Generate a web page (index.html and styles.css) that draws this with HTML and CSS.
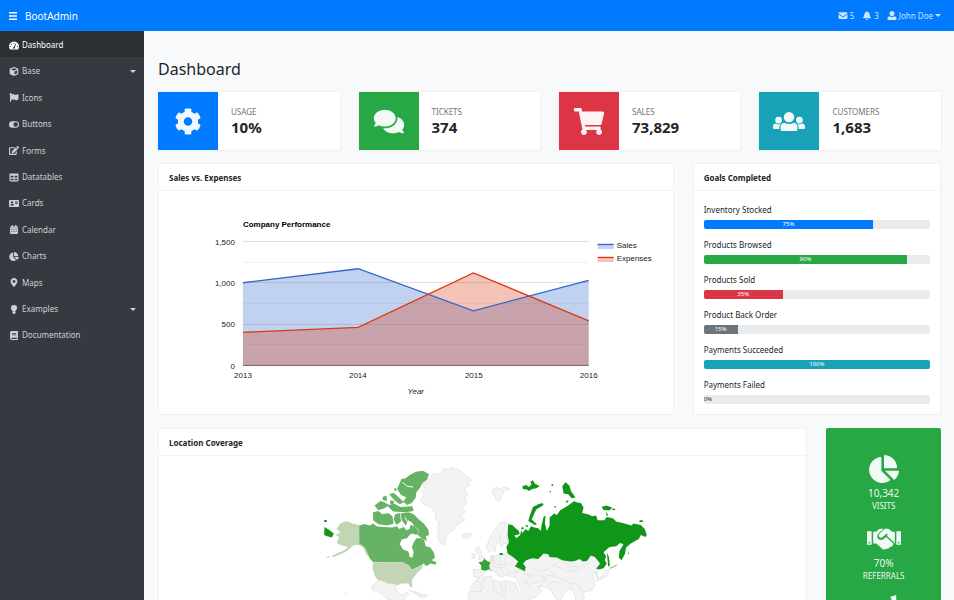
FILE: index.html
```html
<!DOCTYPE html>
<html lang="en">
<head>
<meta charset="utf-8">
<title>BootAdmin</title>
<link rel="stylesheet" href="styles.css">
</head>
<body>
<svg class="sprite" aria-hidden="true">
  <symbol id="cog" viewBox="0 0 512 512"><path d="M444.788 291.1l42.616 24.599c4.867 2.809 7.126 8.618 5.459 13.985-11.07 35.642-29.97 67.842-54.689 94.586a12.016 12.016 0 0 1-14.832 2.254l-42.584-24.595a191.577 191.577 0 0 1-60.759 35.13v49.182a12.01 12.01 0 0 1-9.377 11.718c-34.956 7.85-72.499 8.256-109.219.007-5.49-1.233-9.403-6.096-9.403-11.723v-49.184a191.555 191.555 0 0 1-60.759-35.13l-42.584 24.595a12.016 12.016 0 0 1-14.832-2.254c-24.718-26.744-43.619-58.944-54.689-94.586-1.667-5.366.592-11.175 5.459-13.985L67.212 291.1a193.48 193.48 0 0 1 0-70.199l-42.616-24.599c-4.867-2.809-7.126-8.618-5.459-13.985 11.07-35.642 29.97-67.842 54.689-94.586a12.016 12.016 0 0 1 14.832-2.254l42.584 24.595a191.577 191.577 0 0 1 60.759-35.13V25.759a12.01 12.01 0 0 1 9.377-11.718c34.956-7.85 72.499-8.256 109.219-.007 5.49 1.233 9.403 6.096 9.403 11.723v49.184a191.555 191.555 0 0 1 60.759 35.13l42.584-24.595a12.016 12.016 0 0 1 14.832 2.254c24.718 26.744 43.619 58.944 54.689 94.586 1.667 5.366-.592 11.175-5.459 13.985L444.788 220.9a193.485 193.485 0 0 1 0 70.2zM336 256c0-44.112-35.888-80-80-80s-80 35.888-80 80 35.888 80 80 80 80-35.888 80-80z"/></symbol>
  <symbol id="comments" viewBox="0 0 576 512"><path d="M416 192c0-88.4-93.1-160-208-160S0 103.6 0 192c0 34.3 14.1 65.9 38 92-13.4 30.2-35.5 54.2-35.8 54.5-2.2 2.3-2.8 5.7-1.5 8.7S4.8 352 8 352c36.6 0 66.9-12.3 88.7-25 32.2 15.7 70.3 25 111.3 25 114.9 0 208-71.6 208-160zm122 220c23.9-26 38-57.7 38-92 0-66.9-53.5-124.2-129.3-148.1.9 6.6 1.3 13.3 1.3 20.1 0 105.9-107.7 192-240 192-10.8 0-21.3-.8-31.7-1.9C207.8 439.6 281.8 480 368 480c41 0 79.1-9.2 111.3-25 21.8 12.7 52.1 25 88.7 25 3.2 0 6.1-1.9 7.3-4.8 1.3-2.9.7-6.3-1.5-8.7-.3-.3-22.4-24.2-35.8-54.5z"/></symbol>
  <symbol id="cart" viewBox="0 0 576 512"><path d="M528.12 301.319l47.273-208C578.806 78.301 567.391 64 551.99 64H159.208l-9.166-44.81C147.758 8.021 137.93 0 126.529 0H24C10.745 0 0 10.745 0 24v16c0 13.255 10.745 24 24 24h69.883l70.248 343.435C147.325 417.1 136 435.222 136 456c0 30.928 25.072 56 56 56s56-25.072 56-56c0-15.674-6.447-29.835-16.824-40h209.647C430.447 426.165 424 440.326 424 456c0 30.928 25.072 56 56 56s56-25.072 56-56c0-22.172-12.888-41.332-31.579-50.405l5.517-24.276c3.413-15.018-8.002-29.319-23.403-29.319H218.117l-6.545-32h293.145c11.206 0 20.92-7.754 23.403-18.681z"/></symbol>
  <symbol id="users" viewBox="0 0 640 512"><path d="M320 64a104 104 0 1 1 0 208 104 104 0 0 1 0-208zM112 160a68 68 0 1 1 0 136 68 68 0 0 1 0-136zm416 0a68 68 0 1 1 0 136 68 68 0 0 1 0-136zM226 280c60 32 128 32 188 0 44 4 74 36 74 80v56c0 20-14 32-32 32H184c-18 0-32-12-32-32v-56c0-44 30-76 74-80zM58 298c34 22 74 22 108 0-26 20-38 46-38 78v32H24c-14 0-24-10-24-24v-28c0-34 26-56 58-58zm524 0c-34 22-74 22-108 0 26 20 38 46 38 78v32h104c14 0 24-10 24-24v-28c0-34-26-56-58-58z"/></symbol>
  <symbol id="pie" viewBox="0 0 544 512"><path d="M527.79 288H290.5l158.03 158.03c6.04 6.04 15.98 6.53 22.19.68 38.7-36.46 65.32-85.61 73.13-140.86 1.34-9.46-6.51-17.85-16.06-17.85zm-15.83-64.8C503.72 103.74 408.26 8.28 288.8.04 279.68-.59 272 7.1 272 16.24V240h223.77c9.14 0 16.82-7.68 16.19-16.8zM224 288V50.71c0-9.55-8.39-17.4-17.84-16.06C86.99 51.49-4.1 155.6.14 280.37 4.5 408.51 114.83 513.59 243.03 511.98c50.4-.63 96.97-16.87 135.26-44.03 7.9-5.6 8.42-17.23 1.57-24.08L224 288z"/></symbol>
  <symbol id="handshake" viewBox="0 0 640 512"><path fill-rule="evenodd" d="M0 110h88v256H0zM28 326a16 16 0 1 0 32 0 16 16 0 0 0-32 0zM552 110h88v256h-88zm28 216a16 16 0 1 0 32 0 16 16 0 0 0-32 0z"/><path d="M116 120h56l50-46c10-8 20-12 32-12h56l-92 86c-34 32-32 78-4 106 28 28 70 28 102 2l44-40 122 110c14 14 16 34 4 48l-18 22c-10 12-30 14-42 4-6 34-34 48-58 36-20 20-54 28-82 2L176 340h-60zM524 120h-54l-50-46c-10-8-20-12-32-12h-38c-10 0-20 4-28 12l-88 84c-18 18-18 44-2 62 14 16 40 18 58 4l70-64c8-6 18-6 24 2 6 6 6 18-2 24l-10 10 126 112c6 6 10 14 14 32h12z"/></symbol>
  <symbol id="line" viewBox="0 0 512 512"><path d="M480 0v150L436 106 330 220 230 170 96 310l-44-44 170-170 100 60 78-84-36-36z"/></symbol>
  <symbol id="gauge" viewBox="0 0 576 512"><path fill-rule="evenodd" d="M288 32a288 288 0 0 1 249 432c-6 10-12 16-24 16H63c-12 0-18-6-24-16A288 288 0 0 1 288 32zm0 60a34 34 0 1 0 0 68 34 34 0 0 0 0-68zM144 150a34 34 0 1 0 0 68 34 34 0 0 0 0-68zM90 280a34 34 0 1 0 0 68 34 34 0 0 0 0-68zm396 0a34 34 0 1 0 0 68 34 34 0 0 0 0-68zM370 150l-78 180a56 56 0 1 0 44 20l72-184z"/></symbol>
  <symbol id="cube" viewBox="0 0 512 512"><path fill-rule="evenodd" d="M256 4l224 84c12 5 20 15 20 28v262c0 12-6 22-18 28L256 510 30 406c-12-6-18-16-18-28V116c0-13 8-23 20-28zm0 66L80 134l176 72 176-72zm30 360l154-76V196l-154 64z"/></symbol>
  <symbol id="flag" viewBox="0 0 512 512"><path d="M349.565 98.783C295.978 98.783 251.721 64 184.348 64c-24.955 0-47.309 4.384-68.045 12.013a55.947 55.947 0 0 0 3.586-23.562C118.117 24.015 94.806 1.206 66.338.048 34.345-1.254 8 24.296 8 56c0 19.026 9.497 35.825 24 45.945V488c0 13.255 10.745 24 24 24h16c13.255 0 24-10.745 24-24v-94.4c28.311-12.064 63.582-22.122 114.435-22.122 53.588 0 97.844 34.783 165.217 34.783 48.169 0 86.667-16.294 122.505-40.858C506.84 359.452 512 349.571 512 339.045v-243.1c0-23.393-24.269-38.87-45.485-29.016-34.338 15.948-76.454 31.854-116.95 31.854z"/></symbol>
  <symbol id="toggle" viewBox="0 0 576 512"><path fill-rule="evenodd" d="M192 64h192a192 192 0 0 1 0 384H192a192 192 0 0 1 0-384zm192 64a128 128 0 1 0 0 256 128 128 0 0 0 0-256z"/></symbol>
  <symbol id="edit" viewBox="0 0 576 512"><path d="M402.6 83.2l90.2 90.2c3.8 3.8 3.8 10 0 13.8L274.4 405.6l-92.8 10.3c-12.4 1.4-22.9-9.1-21.5-21.5l10.3-92.8L388.8 83.2c3.8-3.8 10-3.8 13.8 0zm162-22.9l-48.8-48.8c-15.2-15.2-39.9-15.2-55.2 0l-35.4 35.4c-3.8 3.8-3.8 10 0 13.8l90.2 90.2c3.8 3.8 10 3.8 13.8 0l35.4-35.4c15.2-15.3 15.2-40 0-55.2zM384 346.2V448H64V128h229.8c3.2 0 6.2-1.3 8.5-3.5l40-40c7.6-7.6 2.2-20.5-8.5-20.5H48C21.5 64 0 85.5 0 112v352c0 26.5 21.5 48 48 48h352c26.5 0 48-21.5 48-48V306.2c0-10.7-12.9-16-20.5-8.5l-40 40c-2.2 2.3-3.5 5.3-3.5 8.5z"/></symbol>
  <symbol id="table" viewBox="0 0 512 512"><path fill-rule="evenodd" d="M48 32h416c26 0 48 22 48 48v352c0 26-22 48-48 48H48c-26 0-48-22-48-48V80c0-26 22-48 48-48zm16 128v96h160v-96zm224 0v96h160v-96zM64 320v96h160v-96zm224 0v96h160v-96z"/></symbol>
  <symbol id="idcard" viewBox="0 0 576 512"><path fill-rule="evenodd" d="M48 48h480c26 0 48 22 48 48v320c0 26-22 48-48 48H48c-26 0-48-22-48-48V96c0-26 22-48 48-48zm128 80a64 64 0 1 0 0 128 64 64 0 0 0 0-128zM72 368h208c0-56-30-88-60-88h-88c-30 0-60 32-60 88zm280-224v48h160v-48zm0 96v48h160v-48z"/></symbol>
  <symbol id="calendar" viewBox="0 0 448 512"><path fill-rule="evenodd" d="M96 0h64v64h128V0h64v64h48c26 0 48 22 48 48v352c0 26-22 48-48 48H48c-26 0-48-22-48-48V112c0-26 22-48 48-48h48zM0 150v24h448v-24zM70 226v50h60v-50zm124 0v50h60v-50zm124 0v50h60v-50zM70 350v50h60v-50zm124 0v50h60v-50zm124 0v50h60v-50z"/></symbol>
  <symbol id="marker" viewBox="0 0 384 512"><path d="M172.268 501.67C26.97 291.031 0 269.413 0 192 0 85.961 85.961 0 192 0s192 85.961 192 192c0 77.413-26.97 99.031-172.268 309.67-9.535 13.774-29.93 13.773-39.464 0zM192 272c44.183 0 80-35.817 80-80s-35.817-80-80-80-80 35.817-80 80 35.817 80 80 80z"/></symbol>
  <symbol id="bulb" viewBox="0 0 384 512"><path d="M192 0a176 176 0 0 1 176 176c0 90-70 110-84 176H100c-14-66-84-86-84-176A176 176 0 0 1 192 0zM104 376h176v60l-40 76h-96l-40-76z"/></symbol>
  <symbol id="book" viewBox="0 0 448 512"><path fill-rule="evenodd" d="M96 0h328c14 0 24 10 24 24v336c0 10-5 16-10 20-4 18-4 50 0 66 6 4 10 10 10 18v24c0 14-10 24-24 24H96c-54 0-96-42-96-96V96C0 42 42 0 96 0zm16 128v36h232v-36zm0 72v36h232v-36zM96 384c-42 0-42 64 0 64h286c-4-20-4-44 0-64z"/></symbol>
  <symbol id="envelope" viewBox="0 0 512 512"><path d="M48 64h416c26 0 48 22 48 48v20L276 300c-12 9-28 9-40 0L0 132v-20c0-26 22-48 48-48zM0 180l220 158c20 14 52 14 72 0l220-158v220c0 26-22 48-48 48H48c-26 0-48-22-48-48z"/></symbol>
  <symbol id="bell" viewBox="0 0 448 512"><path d="M224 0c18 0 32 14 32 32v20c74 14 126 76 126 156 0 98 34 114 58 146 20 28 4 62-32 62H40c-36 0-52-34-32-62 24-32 58-48 58-146 0-80 52-142 126-156V32c0-18 14-32 32-32zM160 448h128a64 64 0 0 1-128 0z"/></symbol>
  <symbol id="user" viewBox="0 0 512 512"><path d="M256 0a144 144 0 0 1 144 144c0 90-64 160-144 160s-144-70-144-160A144 144 0 0 1 256 0zM130 296c70 64 182 64 252 0l52 14c46 12 78 50 78 96v58c0 28-20 48-48 48H48c-28 0-48-20-48-48v-58c0-46 32-84 78-96z"/></symbol>
</svg>

<div class="app">
  <header class="navbar">
    <button class="menu-toggle" type="button" aria-label="Toggle sidebar"><svg viewBox="0 0 8 8"><path d="M0 0h8v1.5H0zM0 3.2h8v1.5H0zM0 6.4h8V8H0z"/></svg></button>
    <a class="brand" href="#">BootAdmin</a>
    <nav class="account">
      <a href="#"><svg class="icon"><use href="#envelope"/></svg>5</a>
      <a href="#"><svg class="icon"><use href="#bell"/></svg>3</a>
      <a href="#"><svg class="icon"><use href="#user"/></svg>John Doe<span class="caret"></span></a>
    </nav>
  </header>

  <aside class="sidebar">
    <nav>
      <a class="active" href="#"><svg class="icon"><use href="#gauge"/></svg>Dashboard</a>
      <a href="#"><svg class="icon"><use href="#cube"/></svg>Base<span class="caret"></span></a>
      <a href="#"><svg class="icon"><use href="#flag"/></svg>Icons</a>
      <a href="#"><svg class="icon"><use href="#toggle"/></svg>Buttons</a>
      <a href="#"><svg class="icon"><use href="#edit"/></svg>Forms</a>
      <a href="#"><svg class="icon"><use href="#table"/></svg>Datatables</a>
      <a href="#"><svg class="icon"><use href="#idcard"/></svg>Cards</a>
      <a href="#"><svg class="icon"><use href="#calendar"/></svg>Calendar</a>
      <a href="#"><svg class="icon"><use href="#pie"/></svg>Charts</a>
      <a href="#"><svg class="icon"><use href="#marker"/></svg>Maps</a>
      <a href="#"><svg class="icon"><use href="#bulb"/></svg>Examples<span class="caret"></span></a>
      <a href="#"><svg class="icon"><use href="#book"/></svg>Documentation</a>
    </nav>
  </aside>

  <main class="content">
    <h1>Dashboard</h1>
    <div class="grid">
      <section class="stat"><div class="stat-icon blue"><svg><use href="#cog"/></svg></div><div class="stat-text"><span>USAGE</span><strong>10%</strong></div></section>
      <section class="stat"><div class="stat-icon green"><svg><use href="#comments"/></svg></div><div class="stat-text"><span>TICKETS</span><strong>374</strong></div></section>
      <section class="stat"><div class="stat-icon red"><svg><use href="#cart"/></svg></div><div class="stat-text"><span>SALES</span><strong>73,829</strong></div></section>
      <section class="stat"><div class="stat-icon teal"><svg><use href="#users"/></svg></div><div class="stat-text"><span>CUSTOMERS</span><strong>1,683</strong></div></section>

      <section class="card sales">
        <h2>Sales vs. Expenses</h2>
        <svg class="chart" viewBox="1 -1 514 223" role="img" aria-label="Company Performance">
          <g class="gridlines"><path d="M85 49.5h346M85 90.5h346M85 132.5h346"/><path class="minor" d="M85 70.5h346M85 111.5h346M85 152.5h346"/></g>
          <path class="sales-area" d="M85 90.8L200.3 76.8 315.6 118.9 431 88.4V173.5H85z"/>
          <path class="expenses-area" d="M85 140.4L200.3 135.5 315.6 80.9 431 128.9V173.5H85z"/>
          <path class="axis" d="M85 173.5h346"/>
          <path class="sales-line" d="M85 90.8L200.3 76.8 315.6 118.9 431 88.4"/>
          <path class="expenses-line" d="M85 140.4L200.3 135.5 315.6 80.9 431 128.9"/>
          <text class="chart-title" x="85" y="35">Company Performance</text>
          <g class="end"><text x="77" y="53">1,500</text><text x="77" y="94">1,000</text><text x="77" y="135">500</text><text x="77" y="177">0</text></g>
          <g class="middle"><text x="85" y="186">2013</text><text x="200" y="186">2014</text><text x="316" y="186">2015</text><text x="431" y="186">2016</text><text class="axis-title" x="258" y="202">Year</text></g>
          <path class="sales-area" d="M440 52h16v5h-16z"/><path class="sales-line" d="M440 52.5h16"/>
          <path class="expenses-area" d="M440 65h16v5h-16z"/><path class="expenses-line" d="M440 65.5h16"/>
          <text x="459" y="56">Sales</text><text x="459" y="69">Expenses</text>
        </svg>
      </section>

      <section class="card goals">
        <h2>Goals Completed</h2>
        <div class="goal-list">
          <div class="goal"><span>Inventory Stocked</span><div class="track"><div class="bar blue" style="width:75%">75%</div></div></div>
          <div class="goal"><span>Products Browsed</span><div class="track"><div class="bar green" style="width:90%">90%</div></div></div>
          <div class="goal"><span>Products Sold</span><div class="track"><div class="bar red" style="width:35%">35%</div></div></div>
          <div class="goal"><span>Product Back Order</span><div class="track"><div class="bar gray" style="width:15%">15%</div></div></div>
          <div class="goal"><span>Payments Succeeded</span><div class="track"><div class="bar teal" style="width:100%">100%</div></div></div>
          <div class="goal"><span>Payments Failed</span><div class="track"><div class="bar empty" style="width:0%">0%</div></div></div>
        </div>
      </section>

      <section class="card location">
        <h2>Location Coverage</h2>
        <svg class="map" viewBox="1 -1 648 190" role="img" aria-label="World map">
          <g transform="translate(152 -2) scale(.3333)">
            <g class="land">
              <path d="M372 55L384 58 398 48 402 40 416 44 428 38 452 46 462 58 474 64 486 76 476 84 480 92 464 100 474 116 466 130 472 146 458 158 466 172 453 182 465 196 448 206 436 216 432 226 414 236 408 252 406 268 394 268 384 246 388 234 382 218 388 204 378 190 376 172 366 158 350 152 340 146 332 130 344 120 336 108 346 100 338 86 356 76z"/>
              <path d="M456 240l8-6 6 4 12-4 5 8-12 8-14-2z"/>
              <path d="M204 376l20 4 14 8 18 4 6 18 12 12 18-12 4 10-12 12 12 12-60-10-30-24-14-18-4 2 10 20-14-16zM296 406l28 6 12 8-16-2zM326 420h28l-8 8-18-2z"/>
            </g>
            <path class="level-3" d="M148 212L165 207 180 212 190 206 200 214 222 216 248 218 262 214 268 222 282 216 290 226 300 222 302 210 314 214 328 228 322 240 306 236 298 242 292 250 276 254 270 268 280 284 296 290 300 306 308 308 312 292 306 276 312 262 320 250 336 250 344 256 348 274 362 278 372 292 376 308 366 316 380 322 378 330 362 326 350 334 342 326 326 336 306 344 298 332 280 322 190 321 178 306 166 288 158 272 148 270z"/>
            <path class="level-3" d="M262 102L275 72 288 70 300 60 318 50 340 47 358 58 352 74 338 84 330 100 320 112 318 128 306 144 292 150 280 140 290 128 274 120zM194 152L212 138 224 142 238 150 224 160 206 166zM190 172L206 168 218 178 236 174 248 184 252 206 232 212 206 208 190 196zM256 178L270 174 274 200 260 210 252 194zM238 118L252 114 266 126 282 142 270 148 254 136zM232 152L252 146 272 156 308 154 312 168 288 172 250 170zM218 126L230 122 232 138 220 136zM242 136L254 138 250 148 240 146zM272 176L296 172 312 178 326 192 342 206 356 224 358 240 348 244 352 258 336 250 324 240 328 226 312 212 308 204 296 196 288 212 276 196zM302 212L316 216 324 232 308 234zM176 300l10 8 6 12-8-4zM254 100h6v8h-6z"/>
            <path class="gap" d="M278 82l14 12 18 2M300 284l10-24M286 188l12 22"/>
            <path class="level-1" d="M148 210L128 206 110 198 92 206 80 222 92 232 78 240 88 248 80 264 96 272 114 276 104 286 84 294 64 304 72 306 106 292 124 278 134 270 148 270 160 278 172 302 178 304 166 278 148 264zM190 322L280 322 298 332 306 344 322 338 340 330 336 342 324 352 312 368 306 378 308 396 302 398 296 386 276 386 262 392 254 388 236 386 224 380 202 374 194 360 188 340zM50 306l10-2v3l-10 2zM104 411l8 6-2 2z"/>
            <path class="level-5" d="M44 216L56 224 72 236 66 248 52 244 43 240zM43 195h8v6h-8z"/>
          </g>
          <g transform="translate(312 -2) scale(.3333)">
            <g class="land">
              <path d="M68 104l12-6 8 4 18-6 14 6-18 6-4 12-8 18-12-6-2-12-8-4zM58 292L50 276 60 250 74 226 92 204 108 200 118 208 112 240 116 262 100 268 96 276 88 262 94 238 84 254 78 276 76 292 68 284zM18 282l8-6 8 12 4 14 8 8-20 4 4-10-10-10zM8 296l10 4-4 12-8-2z"/>
              <path d="M60 322L70 304 88 300 112 294 132 308 146 320 136 334 150 342 140 352 122 346 112 360 94 366 86 352 76 346 90 366 72 350 60 342zM12 342l34 6-6 10-10 10-18-2z"/>
              <path d="M-4 420L6 392 22 372 44 366 66 364 70 376 92 382 108 376 136 384 148 410 168 440H-4zM110 354l24-2 26 4-8 10-38-2z"/>
              <path d="M150 342L166 350 160 326 188 314 206 312 222 296 240 306 262 308 278 316 304 320 330 312 352 318 364 302 376 306 392 328 380 342 386 352 368 358 374 376 376 394 364 408 340 412 346 430 336 440H320L312 410 298 402 282 418 272 440H264L248 412 232 398 204 394 216 408 198 426 172 438 152 400 146 384 136 366z"/>
              <path d="M390 366l8-2 8-14 12-6-4 18-16 10-18 8zM376 352l8 4 2 14-8-4z"/>
              <path class="border" d="M70 324l20 8 24-8 22 10M90 302l2 30 10 24M112 296l-8 20 8 30M60 330l24 10 20-2M22 376l18 20 20 20M44 370l-12 40M70 378l4 30 34 20M108 378v50M0 410h40M92 382l8 34M160 356l22 6 10 24 20-6 20-20 24 6M188 340l20 10 24-4 22-16 18-12M166 350l26 14 18-2 20 10-18 22M182 362l-12 20 18 20M240 350l28 20 32 14 26 4 14 22M278 318l24 16 34 2 24-12M236 390l16-10 20 4M254 332l20 8 16 10 42-6M300 384l6 20M152 376l18 10"/>
            </g>
            <path class="level-0" d="M62 302l12-2 4 18-10 6-10-8z"/>
            <path class="level-4" d="M26 322L38 320 44 311 52 318 63 323 58 332 61 343 46 348 34 344 35 332zM62 343l4 2-2 6z"/>
            <path class="level-5" d="M116 208L128 210 138 220 148 228 150 238 134 242 140 250 152 240 154 226 158 234 168 222 176 228 184 214 194 218 206 220 214 228 216 210 222 186 228 182 226 206 232 228 240 212 240 188 254 176 262 180 272 166 286 158 298 150 314 138 320 142 334 144 342 158 338 174 356 178 368 184 380 182 384 196 404 196 412 186 430 190 440 200 460 204 486 212 492 206 514 210 526 222 532 240 528 246 514 240 508 252 484 266 470 278 466 298 456 316 448 308 450 288 462 268 452 264 440 274 420 276 402 292 410 304 406 316 412 326 402 340 388 344 380 342 392 326 376 306 364 302 352 318 340 320 330 312 316 318 304 320 278 316 262 308 240 306 236 298 222 296 206 312 188 310 170 316 160 326 168 336 166 349 150 342 136 334 146 320 132 308 114 296 110 276 118 262 114 240z"/>
            <path class="level-5" d="M412 292l6 14 3 26-5 4zM218 144L222 150 200 164 192 180 186 194 202 208 196 210 176 198 182 178 190 156 206 148zM278 94L288 82 300 92 304 108 318 128 306 130 296 118 282 116zM396 156l14-4 18 6-8 9-18-2zM428 160l10 2-2 4-8-2zM408 170l8 10-4 4zM510 196h10v5h-10zM158 94l12-4 8 6 8-8-4-8 8-4 6 10 8 4 6 4-10 6-12 2-10 6-4-4-14-2zM246 88h5v5h-5zM240 108h4v4h-4zM254 154h5v4h-5zM288 138l10-2-6 8zM90 294l10 1v5h-10zM154 222l6-8 2 10zM166 212l8-2 2 8zM474 290l6 6-2 2z"/>
            <path class="islands" d="M420 340l8-2 14-8"/>
          </g>
        </svg>
      </section>

      <section class="summary">
        <div><svg><use href="#pie"/></svg><strong>10,342</strong><span>VISITS</span></div>
        <div><svg><use href="#handshake"/></svg><strong>70%</strong><span>REFERRALS</span></div>
        <div><svg><use href="#line"/></svg></div>
      </section>
    </div>
  </main>
</div>
</body>
</html>
```
FILE: styles.css
```css
* { box-sizing: border-box; }

body {
  margin: 0;
  background: #f8f9fa;
  color: #212529;
  font: 8px/12px "Noto Sans", "Open Sans", sans-serif;
}

a { color: inherit; text-decoration: none; }
h1, h2 { margin: 0; }
svg { fill: currentColor; }
.sprite { display: none; }

.app {
  display: grid;
  grid-template: auto 1fr / 144px 1fr;
  height: 100vh;
}

.icon { width: 10px; height: 9px; flex: none; }

.caret {
  border: 3px solid transparent;
  border-top-color: currentColor;
  border-bottom: 0;
}

.blue { background: #007bff; }
.green { background: #28a745; }
.red { background: #dc3545; }
.teal { background: #17a2b8; }
.gray { background: #6c757d; }

/* Top bar */
.navbar {
  grid-column: 1 / -1;
  display: flex;
  align-items: center;
  gap: 8px;
  height: 31px;
  padding: 0 13px 0 9px;
  background: #007bff;
  color: #fff;
}
.menu-toggle {
  display: flex;
  padding: 0;
  border: 0;
  background: none;
  color: inherit;
}
.menu-toggle svg { width: 8px; height: 8px; }
.brand { font-size: 10px; line-height: 16px; }
.account {
  display: flex;
  gap: 8px;
  margin-left: auto;
  color: #cce4ff;
}
.account a { display: flex; align-items: center; gap: 2px; }

/* Sidebar */
.sidebar { background: #343a40; color: #ced1d4; }
.sidebar a {
  display: flex;
  align-items: center;
  gap: 3px;
  padding: 7px 8px 5px 9px;
  line-height: 1.8;
}
.sidebar .active { background: #2b3035; color: #fff; }
.sidebar .caret { margin-left: auto; }

/* Content */
.content { padding: 26px 13px 0 14px; overflow: hidden; }
h1 { font-size: 16px; font-weight: 400; line-height: 24px; }
.grid {
  display: grid;
  grid-template-columns: repeat(12, minmax(0, 1fr));
  gap: 13px 19px;
  margin-top: 11px;
}

.stat {
  grid-column: span 3;
  display: flex;
  height: 58px;
  background: #fff;
  box-shadow: 0 0 2px #00000018;
}
.stat-icon {
  display: grid;
  place-items: center;
  width: 60px;
  color: #fffffff0;
}
.stat-icon svg { width: 32px; height: 27px; }
.stat-text {
  display: flex;
  flex-direction: column;
  justify-content: center;
  padding: 1px 13px 0;
}
.stat-text span { color: #6c757d; }
.stat-text strong { font-size: 15px; line-height: 19px; }

.card {
  background: #fff;
  border: 1px solid #eff1f3;
  border-radius: 2px;
}
.card h2 {
  padding: 8px 10px 6px;
  border-bottom: 1px solid #f3f4f5;
  font-size: 8px;
  line-height: 12px;
}
.sales { grid-column: span 8; }
.goals { grid-column: span 4; }
.location { grid-column: span 10; }

/* Area chart */
.chart { display: block; width: 100%; font-family: "Liberation Sans", Arial, sans-serif; fill: #222; }
.chart path { fill: none; }
.chart .chart-title { font-weight: 700; fill: #000; }
.chart .axis-title { font-style: italic; }
.end { text-anchor: end; }
.middle { text-anchor: middle; }
.gridlines { stroke: #ddd; }
.minor { stroke: #f0f0f0; }
.axis { stroke: #7a5d62; }
.chart .sales-area { fill: #3366cc4d; }
.chart .expenses-area { fill: #dc39124d; }
.sales-line { stroke: #3366cc; stroke-width: 1.3; }
.expenses-line { stroke: #dc3912; stroke-width: 1.3; }

/* Goals */
.goal-list {
  display: flex;
  flex-direction: column;
  gap: 10px;
  padding: 13px 10px 10px;
}
.goal { display: flex; flex-direction: column; gap: 4px; }
.track {
  height: 9px;
  overflow: hidden;
  border-radius: 2px;
  background: #e9ecef;
}
.bar {
  color: #fff;
  font-size: 6px;
  line-height: 9px;
  text-align: center;
}
.empty { color: #212529; }

/* Map */
.map { display: block; width: 100%; }
.land { fill: #f3f3f3; stroke: #dedede; stroke-width: 2; }
.border { fill: none; }
.gap { fill: none; stroke: #fff; stroke-width: 3; }
.level-0 { fill: #eee6dc; }
.level-1 { fill: #c2d5b5; }
.level-3 { fill: #67b365; }
.level-4 { fill: #36a33a; }
.level-5 { fill: #109618; }
.islands { fill: none; stroke: #109618; stroke-width: 2; }

/* Traffic summary */
.summary {
  grid-column: span 2;
  display: flex;
  flex-direction: column;
  gap: 13px;
  padding: 27px 8px;
  border-radius: 2px;
  background: #28a745;
  color: #fffffff0;
  text-align: center;
}
.summary div { display: flex; flex-direction: column; align-items: center; }
.summary svg { width: 34px; height: 28px; margin-bottom: 4px; }
.summary strong { font-size: 10px; font-weight: 400; line-height: 13px; }
```
